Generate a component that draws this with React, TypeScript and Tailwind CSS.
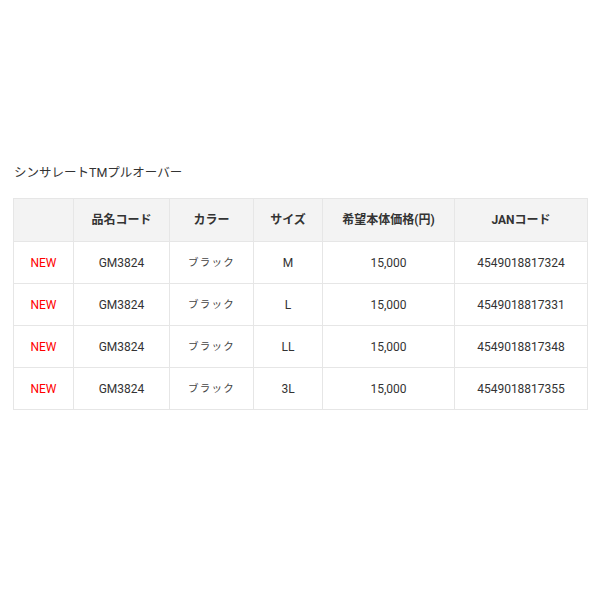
const rows = [
  { size: "M", jan: "4549018817324" },
  { size: "L", jan: "4549018817331" },
  { size: "LL", jan: "4549018817348" },
  { size: "3L", jan: "4549018817355" },
];

const widths = ["w-[60px]", "w-[96px]", "w-[84px]", "w-[69px]", "w-[132px]", "w-[133px]"];

export default function App() {
  return (
    <div className="bg-white w-[600px] h-[600px] pt-[164px] px-[13px] text-[#333] font-['Roboto','Noto_Sans_CJK_JP',sans-serif]">
      <p className="text-[12.5px] leading-[18px] pl-[1px] mb-[16px]">シンサレートTMプルオーバー</p>
      <table className="w-[574px] border-collapse table-fixed text-[12px]">
        <thead>
          <tr className="bg-[#f3f3f3] h-[43px]">
            {["", "品名コード", "カラー", "サイズ", "希望本体価格(円)", "JANコード"].map((h, i) => (
              <th key={i} className={`${widths[i]} border border-[#e6e6e6] font-bold text-center`}>
                {h}
              </th>
            ))}
          </tr>
        </thead>
        <tbody>
          {rows.map((r) => (
            <tr key={r.jan} className="h-[42px]">
              <td className="border border-[#e6e6e6] text-center text-[#ff0000]">NEW</td>
              <td className="border border-[#e6e6e6] text-center">GM3824</td>
              <td className="border border-[#e6e6e6] text-center text-[10.5px] text-[#444] tracking-[1.2px]">ブラック</td>
              <td className="border border-[#e6e6e6] text-center">{r.size}</td>
              <td className="border border-[#e6e6e6] text-center">15,000</td>
              <td className="border border-[#e6e6e6] text-center">{r.jan}</td>
            </tr>
          ))}
        </tbody>
      </table>
    </div>
  );
}
